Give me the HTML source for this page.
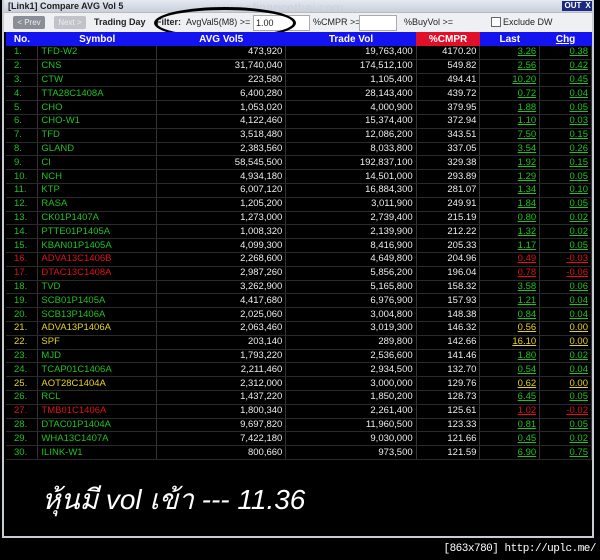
<!DOCTYPE html>
<html><head><meta charset="utf-8"><style>
body{margin:0;width:600px;height:560px;background:#000;overflow:hidden;font-family:"Liberation Sans",Arial,sans-serif;position:relative}
#win{position:absolute;left:2px;top:0;width:592px;height:538px;background:#000;border-left:2px solid #c8ccd4;border-right:2px solid #c8ccd4;border-bottom:2px solid #c8ccd4;box-sizing:border-box}
#title{position:absolute;left:0;top:0;width:588px;height:12px;background:linear-gradient(#e4e8f0,#c9d0dc);font-size:9px;font-weight:bold;color:#222;line-height:12px;padding-left:4px;box-sizing:border-box}
#tb{position:absolute;left:0;top:12px;width:588px;height:20px;background:#eef0f3;border-top:1px solid #bbb;box-sizing:border-box;font-size:9px;color:#222}
.b{position:absolute;top:3px;height:13px;line-height:13px;font-size:8px;color:#eee;text-align:center;border-radius:2px}
table{position:absolute;left:2px;top:32px;border-collapse:collapse;font-size:9.5px;table-layout:fixed}
th{background:#1414f0;color:#fff;height:14px;font-size:10px;padding:0}
td{height:12.8px;padding:0 3px;border-right:1px solid #333;border-bottom:1px solid #2a2a2a;color:#eee;white-space:nowrap;line-height:12px}
td.n{text-align:left;padding-left:8px}
td.r{text-align:right}
.g{color:#1fc21f}.rd{color:#e0101a}.y{color:#e6d21e}
.u{text-decoration:underline}
</style></head><body>
<div id="win">
<div id="title">[Link1] Compare AVG Vol 5</div>
<div style="position:absolute;left:558px;top:1px;width:22px;height:10px;background:#1a2a80;color:#fff;font-size:8px;font-weight:bold;text-align:center;line-height:10px">OUT</div>
<div style="position:absolute;left:580px;top:1px;width:8px;height:10px;background:#1a2a80;color:#fff;font-size:8px;font-weight:bold;text-align:center;line-height:10px">X</div>
<div style="position:absolute;left:210px;top:0;font-size:13px;color:#c8ccd8;opacity:.6">www.efinancethai.com</div>
<div id="tb">
<div class="b" style="left:9px;width:32px;background:#8a8e96">&lt; Prev</div>
<div class="b" style="left:50px;width:32px;background:#c0c4ca">Next &gt;</div>
<div style="position:absolute;left:90px;top:4px;font-weight:bold">Trading Day</div>
<div style="position:absolute;left:152px;top:4px;font-weight:bold">Filter:</div>
<div style="position:absolute;left:182px;top:4px">AvgVal5(M8) &gt;=</div>
<div style="position:absolute;left:249px;top:2px;width:53px;height:14px;background:#fff;border:1px solid #aaa;padding-left:2px;line-height:14px">1.00</div>
<div style="position:absolute;left:309px;top:4px">%CMPR &gt;=</div>
<div style="position:absolute;left:355px;top:2px;width:36px;height:14px;background:#fff;border:1px solid #aaa"></div>
<div style="position:absolute;left:400px;top:4px">%BuyVol &gt;=</div>
<div style="position:absolute;left:487px;top:4px;width:8px;height:8px;background:#fff;border:1px solid #666"></div>
<div style="position:absolute;left:499px;top:4px">Exclude DW</div>
<div style="position:absolute;left:150px;top:-6px;width:136px;height:26px;border:3px solid #000;border-radius:50%"></div>
</div>
<table>
<colgroup><col style="width:32px"><col style="width:119px"><col style="width:130px"><col style="width:131px"><col style="width:64px"><col style="width:60px"><col style="width:52px"></colgroup>
<tr><th>No.</th><th>Symbol</th><th>AVG Vol5</th><th>Trade Vol</th><th style="background:#e0102a">%CMPR</th><th>Last</th><th><span class="u">Chg</span></th></tr>
<tbody id="tb2"></tbody>
</table>
<div style="position:absolute;left:38px;top:478px;font-size:28px;color:#fff;font-style:italic;font-family:'Liberation Sans','Noto Sans CJK SC',sans-serif">หุ้นมี vol เข้า --- 11.36</div>
</div>
<div style="position:absolute;right:4px;top:543px;font-size:11px;color:#fff;font-family:'Liberation Mono',monospace;letter-spacing:-0.5px">[863x780] http://uplc.me/</div>
<script>
var d=[
["g","TFD-W2","473,920","19,763,400","4170.20","3.26","0.38"],
["g","CNS","31,740,040","174,512,100","549.82","2.56","0.42"],
["g","CTW","223,580","1,105,400","494.41","10.20","0.45"],
["g","TTA28C1408A","6,400,280","28,143,400","439.72","0.72","0.04"],
["g","CHO","1,053,020","4,000,900","379.95","1.88","0.05"],
["g","CHO-W1","4,122,460","15,374,400","372.94","1.10","0.03"],
["g","TFD","3,518,480","12,086,200","343.51","7.50","0.15"],
["g","GLAND","2,383,560","8,033,800","337.05","3.54","0.26"],
["g","CI","58,545,500","192,837,100","329.38","1.92","0.15"],
["g","NCH","4,934,180","14,501,000","293.89","1.29","0.05"],
["g","KTP","6,007,120","16,884,300","281.07","1.34","0.10"],
["g","RASA","1,205,200","3,011,900","249.91","1.84","0.05"],
["g","CK01P1407A","1,273,000","2,739,400","215.19","0.80","0.02"],
["g","PTTE01P1405A","1,008,320","2,139,900","212.22","1.32","0.02"],
["g","KBAN01P1405A","4,099,300","8,416,900","205.33","1.17","0.05"],
["rd","ADVA13C1406B","2,268,600","4,649,800","204.96","0.49","-0.03"],
["rd","DTAC13C1408A","2,987,260","5,856,200","196.04","0.78","-0.06"],
["g","TVD","3,262,900","5,165,800","158.32","3.58","0.06"],
["g","SCB01P1405A","4,417,680","6,976,900","157.93","1.21","0.04"],
["g","SCB13P1406A","2,025,060","3,004,800","148.38","0.84","0.04"],
["y","ADVA13P1406A","2,063,460","3,019,300","146.32","0.56","0.00"],
["y","SPF","203,140","289,800","142.66","16.10","0.00"],
["g","MJD","1,793,220","2,536,600","141.46","1.80","0.02"],
["g","TCAP01C1406A","2,211,460","2,934,500","132.70","0.54","0.04"],
["y","AOT28C1404A","2,312,000","3,000,000","129.76","0.62","0.00"],
["g","RCL","1,437,220","1,850,200","128.73","6.45","0.05"],
["rd","TMB01C1406A","1,800,340","2,261,400","125.61","1.02","-0.02"],
["g","DTAC01P1404A","9,697,820","11,960,500","123.33","0.81","0.05"],
["g","WHA13C1407A","7,422,180","9,030,000","121.66","0.45","0.02"],
["g","ILINK-W1","800,660","973,500","121.59","6.90","0.75"]];
var h="";d.forEach(function(r,i){h+='<tr><td class="n '+r[0]+'">'+(i+1)+'.</td><td class="'+r[0]+'">'+r[1]+'</td><td class="r">'+r[2]+'</td><td class="r">'+r[3]+'</td><td class="r">'+r[4]+'</td><td class="r '+r[0]+' u">'+r[5]+'</td><td class="r '+r[0]+' u">'+r[6]+'</td></tr>'});
document.getElementById("tb2").innerHTML=h;
</script>
</body></html>
